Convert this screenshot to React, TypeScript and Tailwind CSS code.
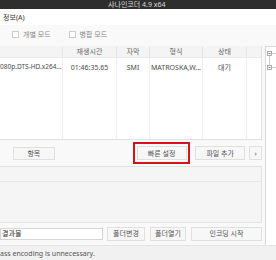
const cols = "grid grid-cols-[63px_54px_33px_53px_44px_15px]";

function Btn({ label, className }: { label: string; className: string }) {
  return (
    <div
      className={`flex items-center justify-center border border-[#e0e0e0] bg-[#f7f7f7] text-[#555] ${className}`}
    >
      {label}
    </div>
  );
}

function Check({ label, className }: { label: string; className: string }) {
  return (
    <div className={`flex items-center ${className}`}>
      <div className="w-[7px] h-[7px] border border-[#cccccc] bg-white" />
      <span className="ml-[4px] text-[#888]">{label}</span>
    </div>
  );
}

export default function App() {
  return (
    <div className="w-[276px] h-[260px] overflow-hidden bg-[#f9f9f9] flex flex-col text-[7px] leading-none text-[#4a4a4a] font-['Noto_Sans','Noto_Sans_CJK_KR',sans-serif]">
      {/* title bar */}
      <div className="h-[9px] bg-[#2e2e2e] text-[#d8d8d8] pl-[108px] flex items-center">
        샤나인코더 4.9 x64
      </div>

      {/* menu */}
      <div className="h-[16px] bg-white flex items-center pl-[3px] text-[#333]">
        정보(A)
      </div>

      {/* mode checks */}
      <div className="h-[19px] flex items-center">
        <Check label="개별 모드" className="ml-[12px]" />
        <Check label="병합 모드" className="ml-[18px]" />
      </div>

      <div className="flex mt-[2px] h-[199px]">
        {/* left column */}
        <div className="w-[262px] flex flex-col">
          {/* file table */}
          <div className="h-[94px] bg-white border-r border-b border-[#e0e0e0] flex flex-col">
            <div className={`${cols} h-[12px] bg-[#f4f4f4] border-b border-[#eaeaea] text-[#666]`}>
              <div className="border-r border-[#e6e6e6]" />
              <div className="border-r border-[#e6e6e6] flex items-center justify-center">재생시간</div>
              <div className="border-r border-[#e6e6e6] flex items-center justify-center">자막</div>
              <div className="border-r border-[#e6e6e6] flex items-center justify-center">형식</div>
              <div className="border-r border-[#e6e6e6] flex items-center justify-center">상태</div>
              <div />
            </div>
            <div className={`${cols} flex-1`}>
              <div className="border-r border-[#efefef] pt-[6px] whitespace-nowrap text-[6.5px]">080p.DTS-HD.x264...</div>
              <div className="border-r border-[#efefef] pt-[6px] text-center">01:46:35.65</div>
              <div className="border-r border-[#efefef] pt-[6px] text-center">SMI</div>
              <div className="border-r border-[#efefef] pt-[6px] text-center whitespace-nowrap">MATROSKA,W...</div>
              <div className="border-r border-[#efefef] pt-[6px] text-center">대기</div>
              <div />
            </div>
          </div>

          {/* buttons */}
          <div className="h-[26px] flex items-center">
            <Btn label="항목" className="ml-[13px] w-[42px] h-[13px]" />
            <div className="ml-[78px] w-[58px] h-[22px] border-2 border-[#d8121b] flex items-center justify-center">
              <Btn label="빠른 설정" className="w-[50px] h-[14px]" />
            </div>
            <Btn label="파일 추가" className="ml-[5px] w-[50px] h-[14px]" />
            <Btn label="›" className="ml-[4px] w-[13px] h-[14px]" />
          </div>

          {/* log panel */}
          <div className="h-[57px] bg-[#f5f5f5] border border-l-0 border-[#e2e2e2] flex flex-col">
            <div className="h-[15px] border-b border-[#e8e8e8]" />
          </div>

          {/* output row */}
          <div className="h-[21px] flex items-center">
            <div className="w-[103px] h-[12px] bg-white border border-[#d6d6d6] flex items-center pl-[1px] text-[#333]">
              결과물
            </div>
            <Btn label="폴더변경" className="ml-[4px] w-[38px] h-[14px]" />
            <Btn label="폴더열기" className="ml-[5px] w-[36px] h-[14px]" />
            <Btn label="인코딩 시작" className="ml-[5px] w-[71px] h-[14px]" />
          </div>
        </div>

        {/* tree panel */}
        <div className="ml-[3px] flex-1 bg-white border-l border-t border-[#d8d8d8]">
          <svg width="10" height="26" viewBox="0 0 10 26" className="mt-[3px]">
            <rect x="1.5" y="1.5" width="4" height="4" fill="white" stroke="#999" strokeWidth="0.8" />
            <line x1="2.5" y1="3.5" x2="4.5" y2="3.5" stroke="#666" strokeWidth="0.8" />
            <line x1="3.5" y1="5.5" x2="3.5" y2="15.5" stroke="#aaa" strokeWidth="0.6" />
            <rect x="1.5" y="15.5" width="4" height="4" fill="white" stroke="#999" strokeWidth="0.8" />
            <line x1="2.5" y1="17.5" x2="4.5" y2="17.5" stroke="#666" strokeWidth="0.8" />
            <line x1="5.5" y1="3.5" x2="10" y2="3.5" stroke="#aaa" strokeWidth="0.6" />
            <line x1="5.5" y1="17.5" x2="10" y2="17.5" stroke="#aaa" strokeWidth="0.6" />
          </svg>
        </div>
      </div>

      {/* status bar */}
      <div className="flex-1 bg-[#f1f1f1] border-t border-[#e4e4e4] flex items-center text-[#555]">
        ass encoding is unnecessary.
      </div>
    </div>
  );
}
